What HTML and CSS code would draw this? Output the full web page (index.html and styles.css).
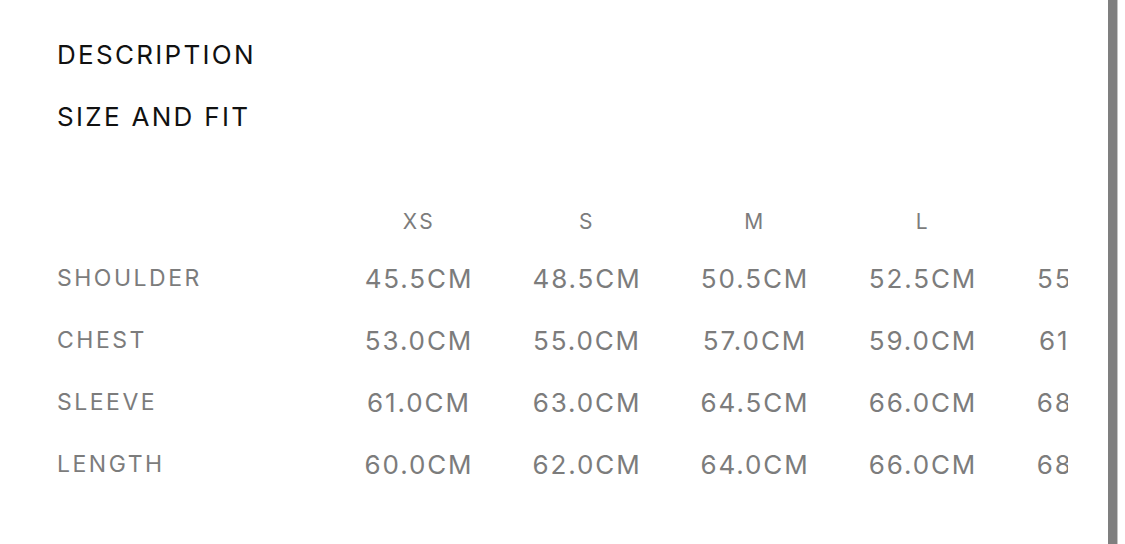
FILE: index.html
```html
<!DOCTYPE html>
<html>
<head>
<meta charset="utf-8">
<link rel="stylesheet" href="styles.css">
</head>
<body>
<div class="page">
  <main class="content">
    <h2 class="section-title">DESCRIPTION</h2>
    <h2 class="section-title">SIZE AND FIT</h2>
    <div class="table-wrap">
      <div class="size-table">
        <div class="cell head"></div>
        <div class="cell head">XS</div>
        <div class="cell head">S</div>
        <div class="cell head">M</div>
        <div class="cell head">L</div>
        <div class="cell head">XL</div>

        <div class="cell label">SHOULDER</div>
        <div class="cell val">45.5CM</div>
        <div class="cell val">48.5CM</div>
        <div class="cell val">50.5CM</div>
        <div class="cell val">52.5CM</div>
        <div class="cell val">55.0CM</div>

        <div class="cell label">CHEST</div>
        <div class="cell val">53.0CM</div>
        <div class="cell val">55.0CM</div>
        <div class="cell val">57.0CM</div>
        <div class="cell val">59.0CM</div>
        <div class="cell val">61.0CM</div>

        <div class="cell label">SLEEVE</div>
        <div class="cell val">61.0CM</div>
        <div class="cell val">63.0CM</div>
        <div class="cell val">64.5CM</div>
        <div class="cell val">66.0CM</div>
        <div class="cell val">68.0CM</div>

        <div class="cell label">LENGTH</div>
        <div class="cell val">60.0CM</div>
        <div class="cell val">62.0CM</div>
        <div class="cell val">64.0CM</div>
        <div class="cell val">66.0CM</div>
        <div class="cell val">68.0CM</div>
      </div>
    </div>
  </main>
  <div class="scrollbar"></div>
  <div class="edge"></div>
</div>
</body>
</html>
```

FILE: styles.css
```css
html, body {
  margin: 0;
  padding: 0;
  background: #fff;
}
body {
  font-family: "Inter", "Liberation Sans", sans-serif;
  width: 1125px;
  height: 544px;
  overflow: hidden;
}
.page {
  display: flex;
  height: 544px;
}
.content {
  width: 1051px;
  padding-left: 57px;
  padding-top: 40px;
  box-sizing: content-box;
}
.section-title {
  margin: 0 0 32px 0;
  font-size: 26px;
  line-height: 30px;
  font-weight: 400;
  letter-spacing: 2.3px;
  color: #111;
}
.table-wrap {
  width: 1011px;
  overflow: hidden;
  margin-top: 63px;
}
.size-table {
  display: grid;
  grid-template-columns: 278px repeat(5, 168px);
  grid-template-rows: 52px;
  grid-auto-rows: 62px;
  width: 1118px;
}
.cell {
  display: flex;
  align-items: center;
  color: #7c7c7c;
  white-space: nowrap;
}
.head {
  justify-content: center;
  font-size: 21px;
  letter-spacing: 2.5px;
}
.label {
  font-size: 23px;
  letter-spacing: 2.5px;
}
.val {
  justify-content: center;
  font-size: 26px;
  letter-spacing: 1.9px;
}
.scrollbar {
  width: 9px;
  height: 544px;
  background: #7f7f7f;
  flex: none;
}
.edge {
  width: 1px;
  height: 544px;
  background: #c4c4c4;
  flex: none;
}
```
